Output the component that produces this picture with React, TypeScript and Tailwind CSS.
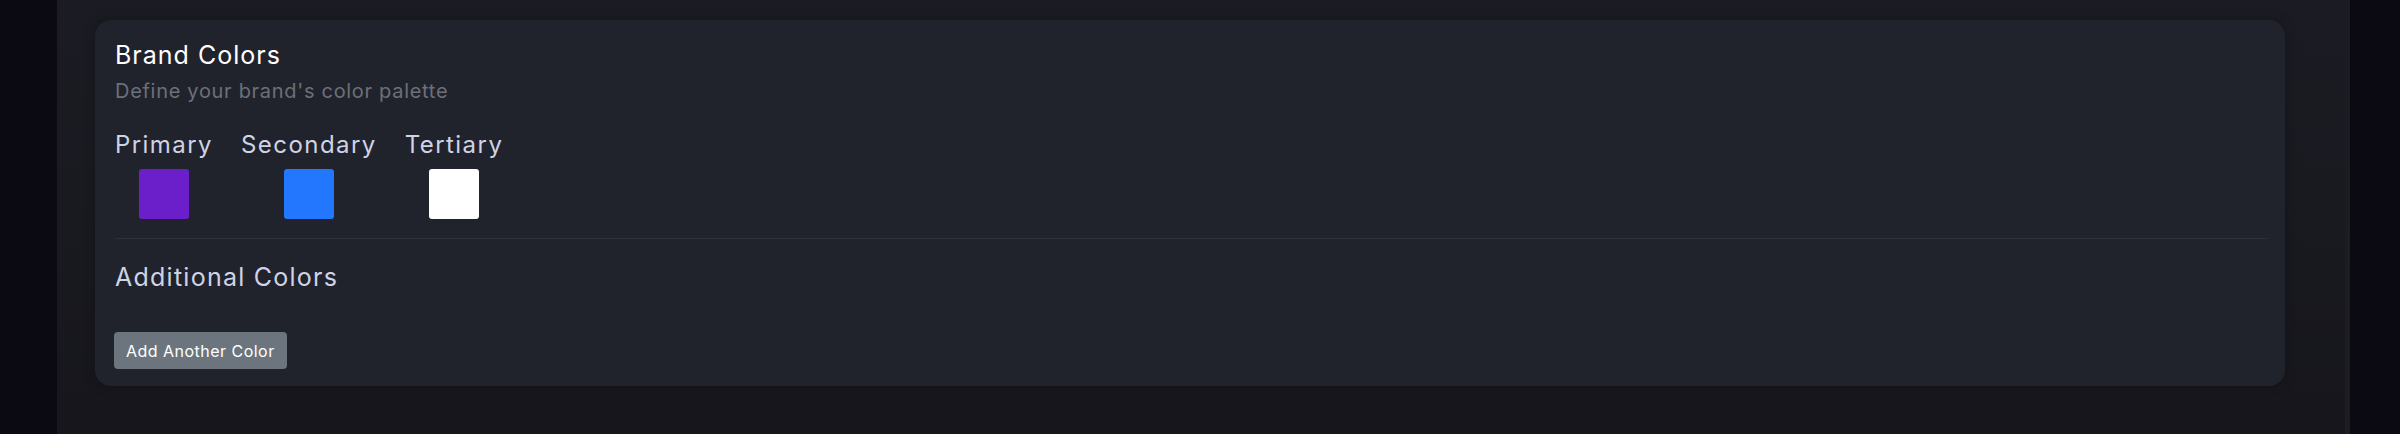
import React from "react";

const swatches = [
  { label: "Primary", color: "bg-[#6a1fcb]" },
  { label: "Secondary", color: "bg-[#2377fe]" },
  { label: "Tertiary", color: "bg-white" },
];

export default function App() {
  return (
    <div
      className="flex h-[434px] w-[2400px] bg-[#0b0a13]"
      style={{ fontFamily: "Inter, 'Noto Sans', sans-serif" }}
    >
      <div className="h-full w-[57px] shrink-0 bg-[#0b0a13]" />
      <main className="h-full w-[2293px] shrink-0 border-r-[5px] border-[#1c1c24] bg-gradient-to-b from-[#1b1c23] to-[#17161d] pl-[38px] pt-[20px]">
        <section className="flex h-[366px] w-[2190px] flex-col rounded-2xl bg-[#21232c] pb-[17px] pl-[20px] pr-[18px] pt-[19px] shadow-[0_0_12px_rgba(0,0,0,0.25)]">
          <h2 className="text-[25px] leading-[32px] font-normal tracking-[0.04em] text-white">
            Brand Colors
          </h2>
          <p className="mt-[6px] text-[20px] leading-[28px] tracking-[0.035em] text-[#6c7079]">
            Define your brand's color palette
          </p>
          <div className="mt-[24px] flex gap-[28px]">
            {swatches.map((s) => (
              <div key={s.label} className="flex flex-col items-center">
                <span className="text-[24px] leading-[32px] tracking-[0.06em] text-[#d0d3e5]">
                  {s.label}
                </span>
                <div className={`mt-[8px] h-[50px] w-[50px] rounded-[3px] ${s.color}`} />
              </div>
            ))}
          </div>
          <div className="mt-[19px] h-px w-full bg-[#2d2f39]" />
          <h3 className="mt-[22px] text-[25px] leading-[32px] tracking-[0.05em] text-[#d0d3e5]">
            Additional Colors
          </h3>
          <div className="mt-auto">
            <button className="-ml-px h-[37px] rounded-[4px] bg-[#6c757d] px-[12px] text-[16px] leading-[24px] tracking-[0.03em] text-white">
              Add Another Color
            </button>
          </div>
        </section>
      </main>
      <div className="h-full flex-1 bg-[#0b0a13]" />
    </div>
  );
}
